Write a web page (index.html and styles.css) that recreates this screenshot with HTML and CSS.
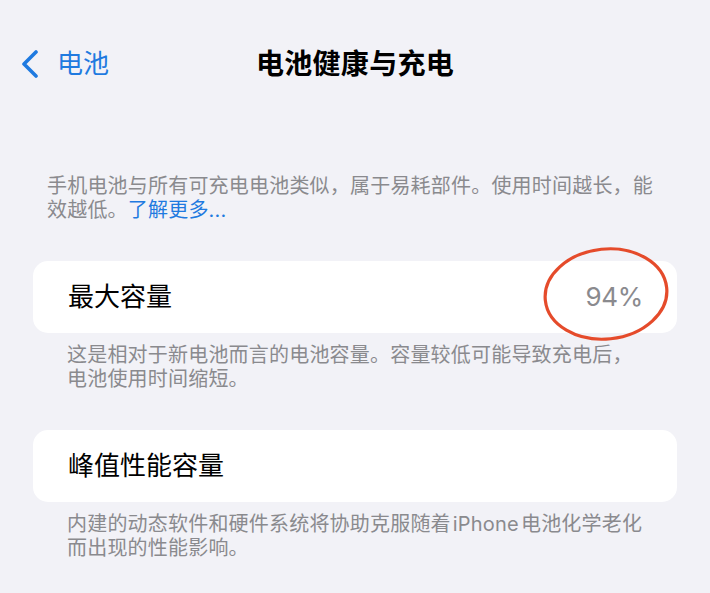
FILE: index.html
```html
<!DOCTYPE html>
<html lang="zh-CN">
<head>
<meta charset="utf-8">
<title>电池健康与充电</title>
<link rel="stylesheet" href="styles.css">
</head>
<body>
<div class="screen">
  <header class="nav">
    <a class="back" href="#">
      <svg class="chev" width="20" height="28" viewBox="0 0 20 28"><polyline points="16,2 4,14 16,26" fill="none" stroke="currentColor" stroke-width="3.6" stroke-linecap="round" stroke-linejoin="round"/></svg>
      <span>电池</span>
    </a>
    <h1 class="title">电池健康与充电</h1>
    <div></div>
  </header>

  <p class="desc">手机电池与所有可充电电池类似，属于易耗部件。使用时间越长，能效越低。<a class="link" href="#">了解更多...</a></p>

  <section class="card card-max">
    <span class="label">最大容量</span>
    <span class="value">94%</span>
    <svg class="circle" width="140" height="110" viewBox="0 0 140 110"><ellipse cx="70" cy="55" rx="61" ry="45" fill="none" stroke="#e54b2b" stroke-width="3.2" transform="rotate(-6 70 55)"/></svg>
  </section>
  <p class="foot">这是相对于新电池而言的电池容量。容量较低可能导致充电后，电池使用时间缩短。</p>

  <section class="card">
    <span class="label">峰值性能容量</span>
  </section>
  <p class="foot">内建的动态软件和硬件系统将协助克服随着<span class="latin">iPhone</span>电池化学老化而出现的性能影响。</p>
</div>
</body>
</html>
```

FILE: styles.css
```css
* { box-sizing: border-box; }
html, body {
  margin: 0;
  padding: 0;
  background: #f2f2f7;
}
body {
  font-family: Inter, "Noto Sans CJK SC", sans-serif;
  color: #000;
}
.screen {
  width: 710px;
  height: 593px;
  overflow: hidden;
  padding-top: 36px;
}
.nav {
  height: 56px;
  display: grid;
  grid-template-columns: 1fr auto 1fr;
  align-items: center;
}
.back {
  display: flex;
  align-items: center;
  gap: 17px;
  padding-left: 20px;
  color: #1f7ae0;
  text-decoration: none;
  font-size: 26px;
  line-height: 1;
}
.chev { display: block; }
.title {
  margin: 0;
  font-size: 28px;
  font-weight: 700;
  line-height: 1;
  letter-spacing: 0.3px;
}
.desc {
  margin: 82px 47px 0 47px;
  font-size: 20px;
  letter-spacing: 0.2px;
  line-height: 24px;
  color: #8a8a8e;
}
.link {
  color: #1f7ae0;
  text-decoration: none;
}
.card {
  position: relative;
  margin: 39px 33px 0 33px;
  height: 72px;
  background: #fff;
  border-radius: 15px;
  display: flex;
  align-items: center;
  justify-content: space-between;
  padding: 0 34px 0 35px;
}
.label {
  font-size: 26px;
  line-height: 1;
}
.value {
  font-size: 26px;
  line-height: 1;
  color: #8a8a8e;
  letter-spacing: -0.3px;
}
.circle {
  position: absolute;
  left: 503px;
  top: -22px;
}
.foot {
  margin: 10px 60px 0 67px;
  font-size: 20px;
  letter-spacing: 0.2px;
  line-height: 24px;
  color: #8a8a8e;
}
.latin {
  margin: 0 2px;
}
```
